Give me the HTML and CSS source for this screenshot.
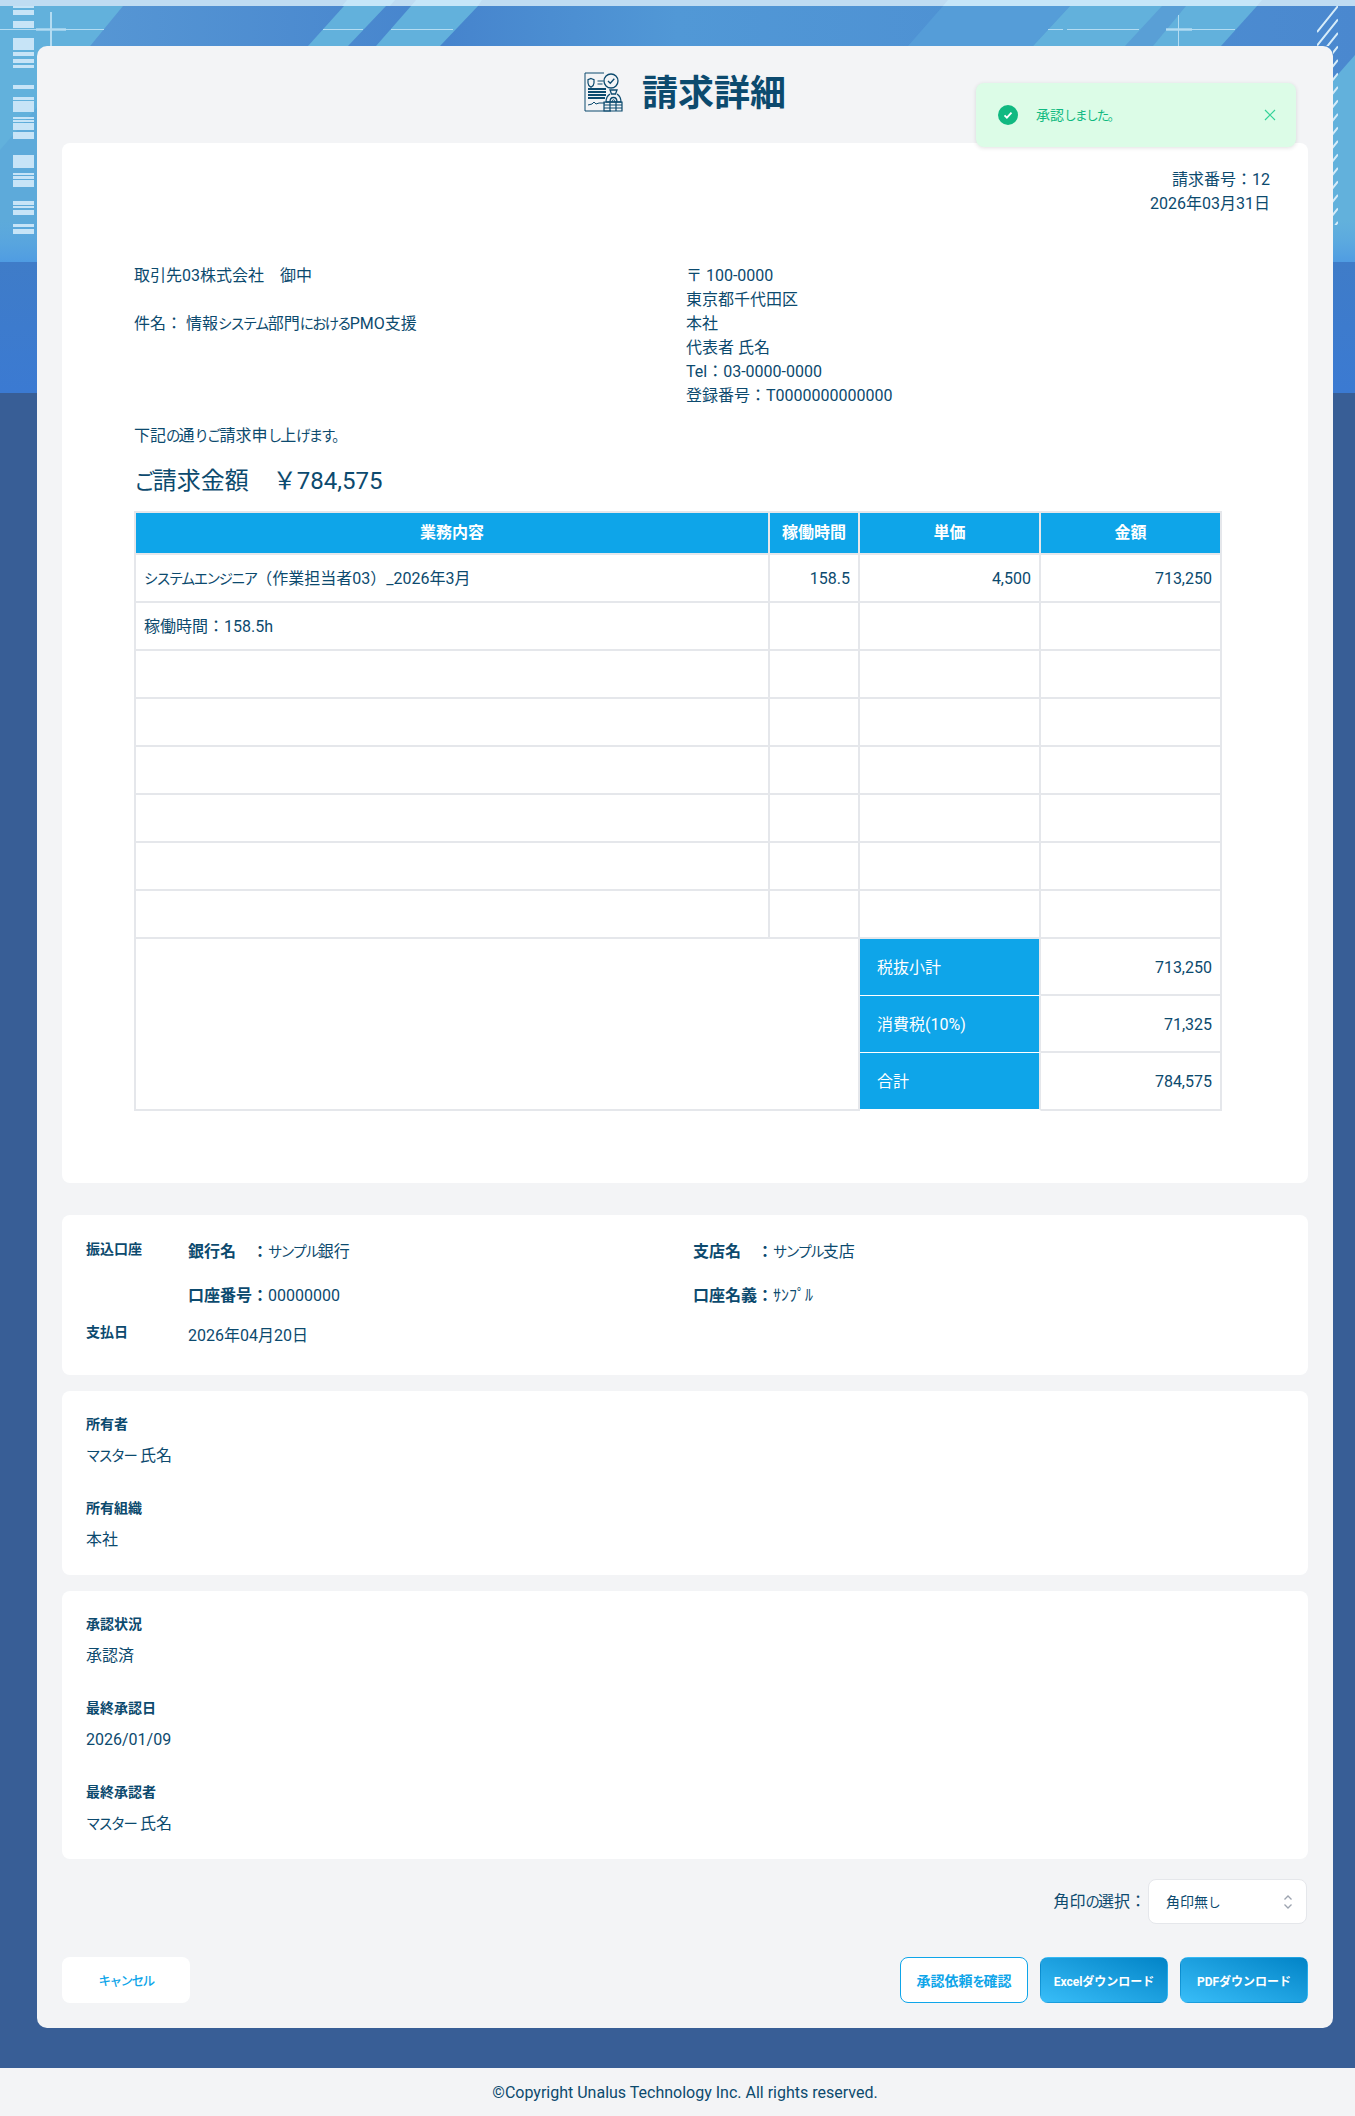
FILE: index.html
```html
<!DOCTYPE html>
<html lang="ja">
<head>
    <meta charset="UTF-8">
    <meta name="viewport" content="width=device-width, initial-scale=1.0">
    <title>請求詳細</title>
    <link rel="stylesheet" href="styles.css">
</head>
<body>

<!-- 背景の装飾 -->
<svg class="page-bg" viewBox="0 0 1355 393" width="1355" height="393" aria-hidden="true">
    <defs>
        <linearGradient id="bgBase" x1="0" y1="0" x2="1" y2="0">
            <stop offset="0" stop-color="#5a9bd6"/>
            <stop offset="0.33" stop-color="#4684cd"/>
            <stop offset="0.5" stop-color="#5198d6"/>
            <stop offset="1" stop-color="#4a88cf"/>
        </linearGradient>
        <linearGradient id="bgLower" x1="0" y1="0" x2="0" y2="1">
            <stop offset="0" stop-color="#3f7cc8"/>
            <stop offset="1" stop-color="#3b7ad2"/>
        </linearGradient>
        <linearGradient id="bgGlow" x1="0" y1="0" x2="0" y2="1">
            <stop offset="0" stop-color="#5aa6e2" stop-opacity="0"/>
            <stop offset="1" stop-color="#4f9ce2" stop-opacity="1"/>
        </linearGradient>
        <clipPath id="hatchClip">
            <rect x="1317" y="6" width="21" height="40"/>
            <rect x="1333" y="46" width="5" height="179"/>
        </clipPath>
    </defs>
    <rect x="0" y="6" width="1355" height="256" fill="url(#bgBase)"/>
    <rect x="0" y="262" width="1355" height="131" fill="url(#bgLower)"/>
    <polygon points="0,6 123,6 -20,180" fill="#62b1dc"/>
    <polygon points="0,150 90,46 90,262 0,262" fill="#5daada"/>
    <polygon points="344,6 386,6 348,46 308,46" fill="#62b1dc"/>
    <polygon points="411,6 478,6 440,46 376,46" fill="#62b1dc"/>
    <polygon points="943,6 1070,6 1033,46 908,46" fill="#559dd8"/>
    <polygon points="1070,6 1257,6 1221,46 1033,46" fill="#62b1dc"/>
    <polygon points="1162,6 1186,6 1153,46 1125,46" fill="#599fd6"/>
    <polygon points="1333,80 1355,55 1355,262 1333,262" fill="#62b1dc"/>
    <rect x="0" y="220" width="1355" height="42" fill="url(#bgGlow)"/>
    <rect x="0" y="0" width="1355" height="6" fill="#bfdcf2"/>
    <polygon points="347,0 395,0 390,6 342,6" fill="#c6e6f8"/>
    <polygon points="416,0 482,0 478,6 411,6" fill="#c6e6f8"/>
    <polygon points="948,0 1262,0 1257,6 943,6" fill="#c6e6f8"/>
    <g fill="#c7e4f7">
        <rect x="13" y="6" width="21" height="2"/>
        <rect x="13" y="10" width="21" height="5"/>
        <rect x="13" y="21" width="21" height="7"/>
        <rect x="13" y="38" width="21" height="12"/>
        <rect x="13" y="52" width="21" height="4"/>
        <rect x="13" y="59" width="21" height="4"/>
        <rect x="13" y="65" width="21" height="3"/>
        <rect x="13" y="85" width="21" height="4"/>
        <rect x="13" y="97" width="21" height="3"/>
        <rect x="13" y="101" width="21" height="11"/>
        <rect x="13" y="117" width="21" height="2"/>
        <rect x="13" y="120" width="21" height="2"/>
        <rect x="13" y="123" width="21" height="7"/>
        <rect x="13" y="132" width="21" height="7"/>
        <rect x="13" y="155" width="21" height="13"/>
        <rect x="13" y="173" width="21" height="2"/>
        <rect x="13" y="176" width="21" height="3"/>
        <rect x="13" y="180" width="21" height="7"/>
        <rect x="13" y="201" width="21" height="4"/>
        <rect x="13" y="206" width="21" height="2"/>
        <rect x="13" y="210" width="21" height="5"/>
        <rect x="13" y="224" width="21" height="3"/>
        <rect x="13" y="229" width="21" height="5"/>
    </g>
    <g fill="#b4dcf2">
        <rect x="0" y="29" width="104" height="1"/>
        <rect x="36" y="28" width="30" height="3" opacity="0.7"/>
        <rect x="50" y="12" width="2" height="34"/>
        <rect x="323" y="29" width="40" height="1"/>
        <rect x="391" y="29" width="62" height="1"/>
        <rect x="1048" y="29" width="15" height="1"/>
        <rect x="1067" y="29" width="72" height="1"/>
        <rect x="1166" y="28" width="26" height="3" opacity="0.7"/>
        <rect x="1166" y="29" width="69" height="1"/>
        <rect x="1178" y="15" width="1" height="31"/>
    </g>
    <path clip-path="url(#hatchClip)" fill="none" stroke="#d6ecf9" stroke-width="2"
        d="M1338 6l-21 26m21-12.500l-21 26m21-12.500l-21 26m21-12.500l-21 26m21-12.500l-21 26m21-12.500l-21 26m21-12.500l-21 26m21-12.500l-21 26m21-12.500l-21 26m21-12.500l-21 26m21-12.500l-21 26m21-12.500l-21 26m21-12.500l-21 26m21-12.500l-21 26m21-12.500l-21 26m21-12.500l-21 26m21-12.500l-21 26"/>
</svg>

<!-- 通知 -->
<div class="toast">
    <svg class="toast-icon" viewBox="0 0 20 20" width="20" height="20">
        <circle cx="10" cy="10" r="10" fill="#10b981"/>
        <path d="M6.5 10.3l2.4 2.4 4.6-5" fill="none" stroke="#fff" stroke-width="1.8"/>
    </svg>
    <span class="toast-text">承認<span class="kana">しました。</span></span>
    <svg class="toast-close" viewBox="0 0 12 12" width="12" height="12">
        <path d="M1 1l10 10M11 1L1 11" fill="none" stroke="#34d399" stroke-width="1.2"/>
    </svg>
</div>

<main class="page">
    <div class="card">
        <h1 class="page-title">
            <svg class="title-icon" viewBox="0 0 40 40" width="40" height="40" fill="none" stroke="#0c4a6e" stroke-width="1">
                <path d="M27 39H1V1h19"/>
                <path d="M7 6.5l3 1.2v3.2c0 2-1.5 3.4-3 4.4-1.500-1-3-2.400-3-4.400V7.700z" stroke-width="1.200"/>
                <path d="M13.500 9h6M13.500 12h5" stroke-width="1.200"/>
                <circle cx="27" cy="9" r="7" stroke-width="1.300"/>
                <path d="M24 9l2.300 2.300 4-4.600" stroke-width="1.300"/>
                <path d="M4 17h18M4 20h18M4 23h18M4 26h17" stroke-width="1.800"/>
                <path d="M4 33l4-1 2-2 2 2 3-1h6" stroke-width="1"/>
                <path d="M26 18h7l-1.500 4h-4z" stroke-width="1.300"/>
                <path d="M26 22c-3 2-4 5-4 8h15c0-3-1-6-4-8" stroke-width="1.300"/>
                <path d="M26 30c0-6 7-6 7 0" stroke-width="1.300"/>
                <path d="M28 30c0-3 3-3 3 0" stroke-width="1"/>
                <path d="M20 30h18v9H20zM20 33h18M20 36h18M26 30v9M32 30v9" stroke-width="1.200"/>
            </svg>
            <span>請求詳細</span>
        </h1>

        <section class="panel invoice">
            <div class="invoice-meta">
                <div>請求番号：12</div>
                <div>2026年03月31日</div>
            </div>
            <div class="invoice-parties">
                <div class="party-to">
                    <div>取引先03株式会社　御中</div>
                    <div class="subject">件名： 情報<span class="kana">システム</span>部門<span class="kana">における</span>PMO支援</div>
                </div>
                <div class="party-from">
                    <div>〒 100-0000</div>
                    <div>東京都千代田区</div>
                    <div>本社</div>
                    <div>代表者 氏名</div>
                    <div>Tel：03-0000-0000</div>
                    <div>登録番号：T0000000000000</div>
                </div>
            </div>
            <p class="invoice-lead">下記<span class="kana">の</span>通<span class="kana">りご</span>請求申<span class="kana">し</span>上<span class="kana">げます。</span></p>
            <p class="invoice-total"><span class="kana">ご</span>請求金額　￥784,575</p>

            <table class="invoice-table">
                <colgroup>
                    <col class="col-desc">
                    <col class="col-hours">
                    <col class="col-price">
                    <col class="col-amount">
                </colgroup>
                <thead>
                    <tr>
                        <th>業務内容</th>
                        <th>稼働時間</th>
                        <th>単価</th>
                        <th>金額</th>
                    </tr>
                </thead>
                <tbody>
                    <tr>
                        <td><span class="kana">システムエンジニア</span>（作業担当者03）_2026年3月</td>
                        <td class="num">158.5</td>
                        <td class="num">4,500</td>
                        <td class="num">713,250</td>
                    </tr>
                    <tr><td>稼働時間：158.5h</td><td></td><td></td><td></td></tr>
                    <tr><td></td><td></td><td></td><td></td></tr>
                    <tr><td></td><td></td><td></td><td></td></tr>
                    <tr><td></td><td></td><td></td><td></td></tr>
                    <tr><td></td><td></td><td></td><td></td></tr>
                    <tr><td></td><td></td><td></td><td></td></tr>
                    <tr><td></td><td></td><td></td><td></td></tr>
                    <tr class="sum-row">
                        <td class="sum-blank" colspan="2" rowspan="3"></td>
                        <td class="sum-label">税抜小計</td>
                        <td class="num">713,250</td>
                    </tr>
                    <tr class="sum-row">
                        <td class="sum-label">消費税(10%)</td>
                        <td class="num">71,325</td>
                    </tr>
                    <tr class="sum-row sum-last">
                        <td class="sum-label">合計</td>
                        <td class="num">784,575</td>
                    </tr>
                </tbody>
            </table>
        </section>

        <section class="panel bank">
            <div class="field-label">振込口座</div>
            <div class="bank-grid">
                <div><b>銀行名　：</b><span class="kana">サンプル</span>銀行</div>
                <div><b>支店名　：</b><span class="kana">サンプル</span>支店</div>
                <div><b>口座番号：</b>00000000</div>
                <div><b>口座名義：</b>ｻﾝﾌﾟﾙ</div>
            </div>
            <div class="field-label pay-label">支払日</div>
            <div class="pay-date">2026年04月20日</div>
        </section>

        <section class="panel fields">
            <div class="field">
                <div class="field-label">所有者</div>
                <div class="field-value"><span class="kana">マスター</span> 氏名</div>
            </div>
            <div class="field">
                <div class="field-label">所有組織</div>
                <div class="field-value">本社</div>
            </div>
        </section>

        <section class="panel fields">
            <div class="field">
                <div class="field-label">承認状況</div>
                <div class="field-value">承認済</div>
            </div>
            <div class="field">
                <div class="field-label">最終承認日</div>
                <div class="field-value">2026/01/09</div>
            </div>
            <div class="field">
                <div class="field-label">最終承認者</div>
                <div class="field-value"><span class="kana">マスター</span> 氏名</div>
            </div>
        </section>

        <div class="stamp-row">
            <span>角印<span class="kana">の</span>選択：</span>
            <div class="stamp-select">
                <span>角印無<span class="kana">し</span></span>
                <svg viewBox="0 0 10 16" width="10" height="16" fill="none" stroke="#9ca3af" stroke-width="1.300">
                    <path d="M1.500 5.500L5 2l3.500 3.500M1.500 10.500L5 14l3.500-3.500"/>
                </svg>
            </div>
        </div>

        <div class="actions">
            <button class="btn btn-cancel"><span class="kana">キャンセル</span></button>
            <div class="actions-right">
                <button class="btn btn-outline">承認依頼<span class="kana">を</span>確認</button>
                <button class="btn btn-primary">Excelダウンロード</button>
                <button class="btn btn-primary">PDFダウンロード</button>
            </div>
        </div>
    </div>
</main>

<footer class="site-footer">©Copyright Unalus Technology Inc. All rights reserved.</footer>

</body>
</html>
```

FILE: styles.css
```css
:root {
    --text-color: #0c4a6e;
    --panel-bg: #ffffff;
    --card-bg: #f3f4f6;
    --page-bg: #385e96;
    --accent: #0ea5e9;
    --line: #e5e7eb;
}

*, *::before, *::after {
    box-sizing: border-box;
}

body {
    margin: 0;
    background-color: var(--page-bg);
    color: var(--text-color);
    font-family: Roboto, "Noto Sans CJK JP", sans-serif;
    font-size: 16px;
    line-height: 24px;
    font-feature-settings: "pkna";
    position: relative;
}

/* かなは幅を詰める */
.kana {
    font-size: 0.9em;
    line-height: 1;
    letter-spacing: -0.13em;
}

.page-bg {
    position: absolute;
    top: 0;
    left: 0;
    display: block;
}

.page {
    position: relative;
    padding: 46px 22px 40px 37px;
}

.card {
    background-color: var(--card-bg);
    border-radius: 10px;
    padding: 0 25px 25px;
}

.page-title {
    height: 97px;
    margin: 0;
    padding-bottom: 2px;
    display: flex;
    align-items: center;
    justify-content: center;
    gap: 18px;
    font-size: 36px;
    font-weight: 700;
    line-height: 1;
}

.title-icon {
    flex: none;
    margin-bottom: 4px;
}

.panel {
    background-color: var(--panel-bg);
    border-radius: 8px;
}

/* 請求書 */
.invoice {
    height: 1040px;
    padding: 25px 38px 0 72px;
}

.invoice-meta {
    text-align: right;
}

.invoice-parties {
    display: grid;
    grid-template-columns: 552px 1fr;
    margin-top: 48px;
}

.subject {
    margin-top: 24px;
}

.invoice-lead {
    margin: 16px 0 0;
}

.invoice-total {
    margin: 15px 0 12px;
    font-size: 24px;
    line-height: 36px;
}

.invoice-table {
    width: 1088px;
    table-layout: fixed;
    border-collapse: separate;
    border-spacing: 0;
    border-top: 2px solid var(--line);
    border-left: 2px solid var(--line);
}

.col-desc { width: 634px; }
.col-hours { width: 90px; }
.col-price { width: 181px; }
.col-amount { width: 181px; }

.invoice-table th,
.invoice-table td {
    border-right: 2px solid var(--line);
    border-bottom: 2px solid var(--line);
    padding: 0 8px;
}

.invoice-table td {
    height: 48px;
    padding-top: 2px;
}

.invoice-table th {
    height: 42px;
    background-color: var(--accent);
    color: #fff;
    font-weight: 700;
    text-align: center;
}

.invoice-table .num {
    text-align: right;
}

.invoice-table .sum-row td {
    height: 57px;
}

.invoice-table .sum-last td {
    height: 58px;
}

.invoice-table .sum-label {
    background-color: var(--accent);
    background-clip: padding-box;
    color: #fff;
    padding-left: 17px;
    border-bottom: 1px solid #fff;
}

.invoice-table .sum-last .sum-label {
    border-bottom: 2px solid #fff;
}

/* 振込先 */
.bank {
    margin-top: 32px;
    height: 160px;
    padding: 24px;
    display: grid;
    grid-template-columns: 102px 1fr;
    grid-template-rows: 64px auto;
    row-gap: 19px;
}

.field-label {
    font-weight: 700;
    font-size: 14px;
    line-height: 20px;
}

.bank-grid {
    display: grid;
    grid-template-columns: 505px 1fr;
    row-gap: 20px;
    margin-top: 1px;
}

.pay-date {
    margin-top: 2px;
}

/* 項目 */
.fields {
    margin-top: 16px;
    padding: 23px 24px;
    display: flex;
    flex-direction: column;
    gap: 30px;
}

.field-label + .field-value {
    margin-top: 10px;
}

/* 角印 */
.stamp-row {
    margin-top: 20px;
    display: flex;
    justify-content: flex-end;
    align-items: center;
    gap: 2px;
    padding-right: 1px;
}

.stamp-select {
    width: 159px;
    height: 45px;
    background-color: #fff;
    border: 1px solid var(--line);
    border-radius: 8px;
    display: flex;
    align-items: center;
    justify-content: space-between;
    padding: 0 13px 0 17px;
    font-size: 14px;
}

/* ボタン */
.actions {
    margin-top: 33px;
    display: flex;
    justify-content: space-between;
}

.actions-right {
    display: flex;
    gap: 12px;
}

.btn {
    width: 128px;
    height: 46px;
    padding: 0;
    border: 1px solid transparent;
    border-radius: 8px;
    font-family: inherit;
    font-feature-settings: inherit;
    font-size: 14px;
    font-weight: 700;
    cursor: pointer;
}

.btn-cancel {
    background-color: #fff;
    color: var(--accent);
    font-weight: 500;
}

.btn-outline {
    background-color: #fff;
    color: var(--accent);
    border-color: var(--accent);
}

.btn-primary {
    background-image: linear-gradient(to top right, #38bdf8, #0284c7);
    color: #fff;
    font-size: 12px;
}

/* 通知 */
.toast {
    position: absolute;
    top: 83px;
    left: 976px;
    width: 320px;
    height: 64px;
    z-index: 2;
    display: flex;
    align-items: center;
    padding: 0 20px 0 22px;
    background-color: #dcfce7;
    border-radius: 8px;
    box-shadow: 0 1px 4px rgba(0, 0, 0, 0.12);
    color: #10b981;
    font-size: 14px;
}

.toast-text {
    margin-left: 18px;
    flex: 1;
}

.site-footer {
    position: relative;
    height: 48px;
    background-color: var(--card-bg);
    padding-left: 15px;
    text-align: center;
    line-height: 50px;
}
```
